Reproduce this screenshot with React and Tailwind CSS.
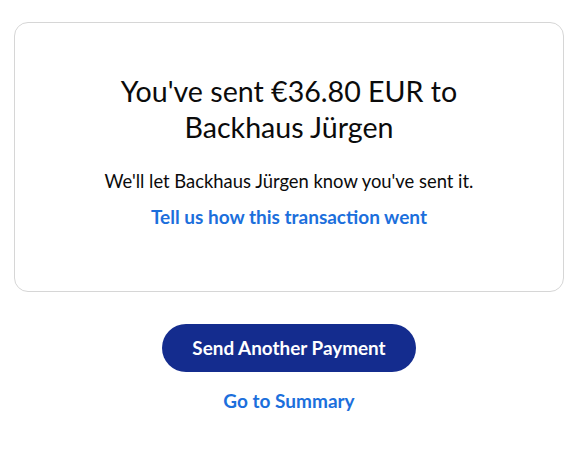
export default function App() {
  return (
    <div className="w-[578px] h-[473px] bg-white px-[14px] pt-[22px]" style={{ fontFamily: "Lato, 'Noto Sans', sans-serif" }}>
      <div className="h-[270px] rounded-[14px] border border-[#d6d6d6] flex flex-col items-center pt-[50px]">
        <h1 className="text-[28.6px] leading-[36px] text-[#0b0b0b] text-center font-normal">
          You've sent €36.80 EUR to
          <br />
          Backhaus Jürgen
        </h1>
        <p className="mt-[25px] text-[18.4px] leading-[22px] text-[#0b0b0b]">We'll let Backhaus Jürgen know you've sent it.</p>
        <a className="mt-[14px] text-[19px] leading-[22px] font-bold text-[#1c6fdc]">Tell us how this transaction went</a>
      </div>
      <div className="flex flex-col items-center mt-[32px]">
        <button className="w-[254px] h-[48px] rounded-full bg-[#142c8e] text-white text-[18.9px] font-bold">Send Another Payment</button>
        <a className="mt-[18px] text-[19px] leading-[22px] font-bold text-[#1c6fdc]">Go to Summary</a>
      </div>
    </div>
  );
}
